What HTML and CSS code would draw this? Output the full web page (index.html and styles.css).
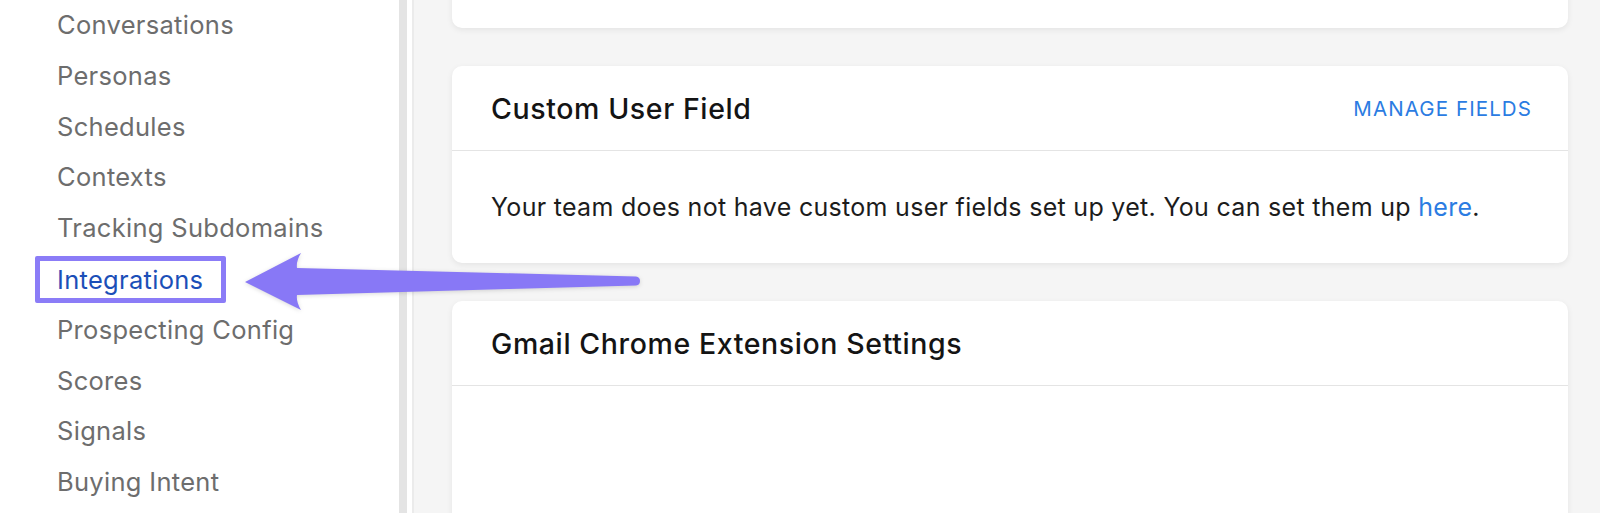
FILE: index.html
```html
<!DOCTYPE html>
<html lang="en">
<head>
<meta charset="utf-8">
<title>Settings</title>
<link rel="stylesheet" href="styles.css">
</head>
<body>
<div class="app">
  <nav class="sidebar">
    <ul class="nav-list">
      <li class="nav-item">Conversations</li>
      <li class="nav-item">Personas</li>
      <li class="nav-item">Schedules</li>
      <li class="nav-item">Contexts</li>
      <li class="nav-item">Tracking Subdomains</li>
      <li class="nav-item nav-item-wrap"><span class="nav-active">Integrations</span></li>
      <li class="nav-item">Prospecting Config</li>
      <li class="nav-item">Scores</li>
      <li class="nav-item">Signals</li>
      <li class="nav-item">Buying Intent</li>
    </ul>
  </nav>
  <div class="divider"></div>
  <main class="main">
    <div class="cards">
      <section class="card card-partial"></section>
      <section class="card">
        <header class="card-header">
          <h2 class="card-title">Custom User Field</h2>
          <a class="card-action">MANAGE FIELDS</a>
        </header>
        <div class="card-body">
          <p class="card-text">Your team does not have custom user fields set up yet. You can set them up <a class="link">here</a>.</p>
        </div>
      </section>
      <section class="card card-tall">
        <header class="card-header">
          <h2 class="card-title">Gmail Chrome Extension Settings</h2>
        </header>
        <div class="card-body card-body-empty"></div>
      </section>
    </div>
  </main>
</div>
<svg class="annotation-arrow" width="1600" height="513" viewBox="0 0 1600 513" aria-hidden="true">
  <path d="M245 282 L301 253 Q296 261 297 268 L636 276.5 Q640 277 640 281 Q640 285 636 285.5 L297 295 Q296 302 301 310 Z" fill="#8878f6"/>
</svg>
</body>
</html>
```

FILE: styles.css
```css
* {
  box-sizing: border-box;
}

html, body {
  margin: 0;
  padding: 0;
  height: 513px;
  overflow: hidden;
  background: #f5f5f5;
  font-family: Inter, "Noto Sans", "Liberation Sans", sans-serif;
}

.app {
  display: flex;
  height: 513px;
}

.sidebar {
  width: 399px;
  flex: 0 0 399px;
  background: #ffffff;
}

.nav-list {
  list-style: none;
  margin: 0;
  padding: 0 0 0 57px;
}

.nav-item {
  height: 50.8px;
  line-height: 50.8px;
  font-size: 25.5px;
  letter-spacing: 0.3px;
  color: #6d6d6d;
  white-space: nowrap;
}

.nav-item-wrap {
  padding-top: 2px;
}

.nav-active {
  display: inline-block;
  height: 47px;
  line-height: 37px;
  margin-left: -22px;
  padding: 0 18px 0 17px;
  border: 5px solid #8b7cf7;
  border-radius: 2px;
  color: #1b4fb8;
  vertical-align: top;
}

.divider {
  flex: 0 0 15px;
  background: #ffffff;
  border-left: 8px solid #e4e4e4;
  border-right: 2px solid #ebebeb;
}

.main {
  flex: 1;
  padding: 0 32px 0 38px;
  background: #f5f5f5;
  overflow: hidden;
}

.cards {
  display: flex;
  flex-direction: column;
  gap: 38px;
  margin-top: -72px;
}

.card {
  background: #ffffff;
  border-radius: 10px;
  box-shadow: 0 2px 6px rgba(0, 0, 0, 0.07);
}

.card-partial {
  height: 100px;
}

.card-header {
  height: 85px;
  display: flex;
  align-items: center;
  justify-content: space-between;
  padding: 0 36px 0 39px;
  border-bottom: 1px solid #e4e4e4;
}

.card-title {
  margin: 0;
  font-size: 28.5px;
  font-weight: 550;
  letter-spacing: 0.6px;
  color: #141414;
}

.card-action {
  font-size: 20.5px;
  color: #2b7ce2;
  letter-spacing: 1.1px;
}

.card-body {
  height: 112px;
  display: flex;
  align-items: center;
  padding: 0 39px;
}

.card-body-empty {
  height: 200px;
}

.card-text {
  margin: 0;
  font-size: 25px;
  letter-spacing: 0.3px;
  color: #1c1c1c;
}

.link {
  color: #2b7ce2;
}

.annotation-arrow {
  position: absolute;
  left: 0;
  top: 0;
  pointer-events: none;
  filter: drop-shadow(0 1px 2px rgba(0, 0, 0, 0.15));
}
```
